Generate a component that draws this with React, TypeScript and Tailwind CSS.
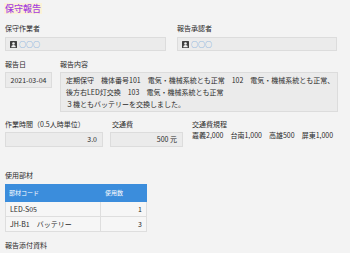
const PersonIcon = () => (
  <svg width="7" height="7" viewBox="0 0 14 14" className="shrink-0">
    <rect x="0" y="0" width="14" height="14" rx="1" fill="#3f3f3f" />
    <circle cx="7" cy="5" r="2.6" fill="#f2f2f2" />
    <path d="M2.5 12.5c0-3 2-4.6 4.5-4.6s4.5 1.6 4.5 4.6z" fill="#f2f2f2" />
  </svg>
);

const Label = ({ children, className = '' }: { children: React.ReactNode; className?: string }) => (
  <div className={`text-[7px] leading-[9px] text-[#2a2a2a] whitespace-nowrap ${className}`}>{children}</div>
);

const UserField = ({ name }: { name: string }) => (
  <div className="mt-[4px] h-[14px] flex items-center gap-[2px] px-[4px] bg-[#ebebeb] border border-[#dcdcdc]">
    <PersonIcon />
    <span className="text-[7px] leading-none text-[#4a8fd6]">{name}</span>
  </div>
);

const parts = [
  { code: 'LED-S05', qty: 1 },
  { code: 'JH-B1　バッテリー', qty: 3 },
];

export default function App() {
  return (
    <div
      className="w-[350px] h-[253px] overflow-hidden bg-[#f3f3f3] pl-[5px] pt-[3px] text-[#2a2a2a] leading-none"
      style={{ fontFamily: '"Noto Sans CJK JP", "Noto Sans", sans-serif' }}
    >
      <div className="w-fit -ml-[1px] px-[1px] bg-[#fbf2d6] text-[9px] leading-[11px] font-medium text-[#a43fe0]">保守報告</div>

      <div className="mt-[10px] flex gap-[11px]">
        <div className="w-[161px]">
          <Label>保守作業者</Label>
          <UserField name="○○○" />
        </div>
        <div className="w-[160px]">
          <Label>報告承認者</Label>
          <UserField name="○○○" />
        </div>
      </div>

      <div className="mt-[9px] flex gap-[8px] items-start">
        <div className="w-[47px]">
          <Label>報告日</Label>
          <div className="mt-[3px] h-[16px] flex items-center justify-center bg-[#ebebeb] border border-[#dcdcdc] text-[7px] leading-none">
            2021-03-04
          </div>
        </div>
        <div className="w-[278px]">
          <Label>報告内容</Label>
          <div className="mt-[3px] py-[1px] px-[5px] bg-[#ebebeb] border border-[#dcdcdc] text-[7px] leading-[12px] whitespace-nowrap">
            <div>定期保守　機体番号101　電気・機械系統とも正常　102　電気・機械系統とも正常、</div>
            <div>後方右LED灯交換　103　電気・機械系統とも正常</div>
            <div>３機ともバッテリーを交換しました。</div>
          </div>
        </div>
      </div>

      <div className="mt-[8px] flex items-start">
        <div className="w-[98px]">
          <Label>作業時間（0.5人時単位）</Label>
          <div className="mt-[3px] h-[15px] flex items-center justify-end pr-[5px] bg-[#ebebeb] border border-[#dcdcdc] text-[7px] leading-none">
            3.0
          </div>
        </div>
        <div className="ml-[7px] w-[73px]">
          <Label className="pl-[2px]">交通費</Label>
          <div className="mt-[3px] h-[15px] flex items-center justify-end pr-[5px] bg-[#ebebeb] border border-[#dcdcdc] text-[7px] leading-none">
            500 元
          </div>
        </div>
        <div className="ml-[9px]">
          <Label>交通費規程</Label>
          <div className="mt-[2px] text-[7px] leading-[9px] whitespace-nowrap">嘉義2,000　台南1,000　高雄500　屏東1,000</div>
        </div>
      </div>

      <Label className="mt-[24px]">使用部材</Label>

      <div className="mt-[4px] w-[142px] text-[7px]">
        <div className="h-[18px] flex items-center bg-[#3b8ddc] text-white text-[6px]">
          <div className="w-[95px] pl-[4px]">部材コード</div>
          <div className="pl-[5px]">使用数</div>
        </div>
        {parts.map((p) => (
          <div key={p.code} className="h-[15px] flex border-b border-x border-[#dedede] bg-[#f6f6f6]">
            <div className="w-[95px] pl-[4px] flex items-center border-r border-[#dedede] whitespace-nowrap">{p.code}</div>
            <div className="flex-1 flex items-center justify-end pr-[4px]">{p.qty}</div>
          </div>
        ))}
      </div>

      <Label className="mt-[9px]">報告添付資料</Label>
    </div>
  );
}
